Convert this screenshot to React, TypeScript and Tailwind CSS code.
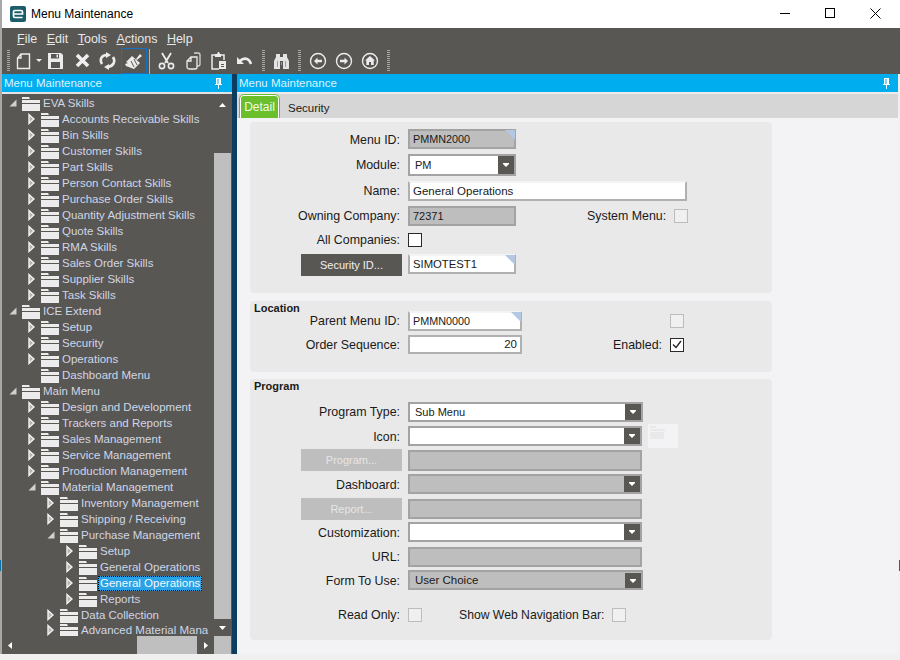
import React from 'react';

const fontClass = "font-['Liberation_Sans',Arial,sans-serif]";

type TreeItem = { label: string; level: number; open?: boolean; leaf?: boolean; selected?: boolean };

const treeItems: TreeItem[] = [
  { label: 'EVA Skills', level: 0, open: true },
  { label: 'Accounts Receivable Skills', level: 1 },
  { label: 'Bin Skills', level: 1 },
  { label: 'Customer Skills', level: 1 },
  { label: 'Part Skills', level: 1 },
  { label: 'Person Contact Skills', level: 1 },
  { label: 'Purchase Order Skills', level: 1 },
  { label: 'Quantity Adjustment Skills', level: 1 },
  { label: 'Quote Skills', level: 1 },
  { label: 'RMA Skills', level: 1 },
  { label: 'Sales Order Skills', level: 1 },
  { label: 'Supplier Skills', level: 1 },
  { label: 'Task Skills', level: 1 },
  { label: 'ICE Extend', level: 0, open: true },
  { label: 'Setup', level: 1 },
  { label: 'Security', level: 1 },
  { label: 'Operations', level: 1 },
  { label: 'Dashboard Menu', level: 1, leaf: true },
  { label: 'Main Menu', level: 0, open: true },
  { label: 'Design and Development', level: 1 },
  { label: 'Trackers and Reports', level: 1 },
  { label: 'Sales Management', level: 1 },
  { label: 'Service Management', level: 1 },
  { label: 'Production Management', level: 1 },
  { label: 'Material Management', level: 1, open: true },
  { label: 'Inventory Management', level: 2 },
  { label: 'Shipping / Receiving', level: 2 },
  { label: 'Purchase Management', level: 2, open: true },
  { label: 'Setup', level: 3 },
  { label: 'General Operations', level: 3 },
  { label: 'General Operations', level: 3, selected: true },
  { label: 'Reports', level: 3 },
  { label: 'Data Collection', level: 2 },
  { label: 'Advanced Material Mana', level: 2 },
];

const Folder = () => (
  <svg width="18" height="15" viewBox="0 0 18 15" className="ml-[4px] shrink-0">
    <path d="M0 1h7l1 2H0z" fill="#ececec" />
    <path d="M0 4h18v3H0z" fill="#ececec" />
    <path d="M0 8h18v7H0z" fill="#ececec" />
  </svg>
);

const Expander = ({ open }: { open?: boolean }) =>
  open ? (
    <svg width="8" height="8" viewBox="0 0 8 8" className="shrink-0">
      <path d="M7.500 0.500v7h-7z" fill="#d0d0d0" />
    </svg>
  ) : (
    <svg width="7" height="12" viewBox="0 0 7 12" className="shrink-0">
      <path d="M1 1.500l5 4.500-5 4.500z" fill="#b4b4b4" stroke="#f2f2f2" strokeWidth="1.400" />
    </svg>
  );

const Grip = () => (
  <div className="h-[22px] w-[3px] shrink-0 bg-[repeating-linear-gradient(to_bottom,#a8a8a6_0,#a8a8a6_1px,transparent_1px,transparent_2px)]" />
);

const PinIcon = () => (
  <svg width="9" height="11" viewBox="0 0 9 11">
    <path d="M2 0h5v6h1v1H1V6h1z M3.500 1v5h1V1z" fill="#fff" fillRule="evenodd" />
    <path d="M4 7h1v4H4z" fill="#fff" />
  </svg>
);

const ToolIcon = ({ children, w = 18 }: { children: React.ReactNode; w?: number }) => (
  <svg width={w} height="18" viewBox={`0 0 ${w} 18`} fill="none" className="shrink-0">
    {children}
  </svg>
);

const Toolbar = () => (
  <div className="flex h-[26px] items-center pl-[5px]">
    <Grip />
    <div className="ml-[6px]">
      <ToolIcon w={15}>
        <path d="M5 2h8.500v14.500h-12V6z M5 2v4H1.500" stroke="#ececec" strokeWidth="1.400" />
      </ToolIcon>
    </div>
    <svg width="6" height="3" viewBox="0 0 6 3" className="ml-[5px] mb-[2px]">
      <path d="M0 0h6L3 3z" fill="#ececec" />
    </svg>
    <div className="ml-[5px]">
      <ToolIcon w={17}>
        <path d="M1 1h13l2 2v14H1z" fill="#ececec" />
        <path d="M4 2h8v4.500H4z M4 10h9v6H4z" fill="#595754" />
        <path d="M9.500 2.500h1.500v3H9.500z" fill="#ececec" />
      </ToolIcon>
    </div>
    <div className="ml-[11px]">
      <ToolIcon w={15}>
        <path d="M2 3l11 11M13 3L2 14" stroke="#efefef" strokeWidth="3.600" />
      </ToolIcon>
    </div>
    <div className="ml-[9px]">
      <ToolIcon w={17}>
        <path d="M3 12C0 7 3 3 8 3M14 5c3 5 0 9-5 10" stroke="#ececec" strokeWidth="2.600" />
        <path d="M7 0l5 3-5 3z M10 12l-5 3 5 3z" fill="#ececec" />
      </ToolIcon>
    </div>
    <div className="ml-[5px] flex h-[26px] w-[26px] shrink-0 items-center justify-center border border-[#1673c2]">
      <ToolIcon w={20}>
        <path d="M12 7l4-5 2 2-5 4z" fill="#ececec" />
        <path d="M8 4l8 7-6 6-8-3-1-2 3-1-2-1z" fill="#ececec" />
        <path d="M7 9l3 6M10 7l3 6" stroke="#595754" strokeWidth="1" />
      </ToolIcon>
    </div>
    <div className="ml-[2px] h-[25px] w-px shrink-0 bg-[#b5b5b3]" />
    <div className="ml-[8px]">
      <ToolIcon w={17}>
        <path d="M4 1l6 10M13 1L7 11" stroke="#ececec" strokeWidth="1.800" />
        <circle cx="4" cy="14" r="2.600" stroke="#ececec" strokeWidth="1.600" />
        <circle cx="13" cy="14" r="2.600" stroke="#ececec" strokeWidth="1.600" />
      </ToolIcon>
    </div>
    <div className="ml-[11px]">
      <ToolIcon w={15}>
        <path d="M8 1h4c1 0 2 1 2 2v9c0 1-1 2-2 2H11" stroke="#d5d5d5" strokeWidth="1.300" />
        <path d="M5 5h6v10c0 1-1 2-2 2H3c-1 0-2-1-2-2V9z M5 5v4H1" stroke="#ececec" strokeWidth="1.300" />
      </ToolIcon>
    </div>
    <div className="ml-[10px]">
      <ToolIcon w={15}>
        <path d="M4 3H1v14h7" stroke="#ececec" strokeWidth="1.500" />
        <path d="M10 3h3v5" stroke="#ececec" strokeWidth="1.500" />
        <path d="M4 2h2l1-2h1l1 2h1v3H4z" fill="#ececec" />
        <path d="M8 9h7v8H8z" fill="#ececec" />
        <path d="M10 12h3v1h-3z M10 14h3v1h-3z" fill="#595754" />
      </ToolIcon>
    </div>
    <div className="ml-[10px]">
      <ToolIcon w={17}>
        <path d="M4 9c4-4 9-3 11 3" stroke="#ececec" strokeWidth="2.600" />
        <path d="M1 5v7h7z" fill="#ececec" />
      </ToolIcon>
    </div>
    <div className="ml-[9px]">
      <Grip />
    </div>
    <div className="ml-[8px]">
      <ToolIcon w={17}>
        <path d="M3 2h4v3h3V2h4v3l2 4v8h-6V9H7v8H1V9l2-4z" fill="#e4e4e4" />
        <path d="M8 10h1v3H8z M4 9h1v6H4z M12 9h1v6h-1z" fill="#9d9d9b" />
      </ToolIcon>
    </div>
    <div className="ml-[8px]">
      <Grip />
    </div>
    <div className="ml-[8px]">
      <ToolIcon w={18}>
        <circle cx="9" cy="9" r="7.500" stroke="#ececec" strokeWidth="1.400" />
        <path d="M5 9l3.500-3.500v2.300H13v2.400H8.500v2.300z" fill="#ececec" />
      </ToolIcon>
    </div>
    <div className="ml-[8px]">
      <ToolIcon w={18}>
        <circle cx="9" cy="9" r="7.500" stroke="#ececec" strokeWidth="1.400" />
        <path d="M13 9l-3.500-3.500v2.300H5v2.400h4.500v2.300z" fill="#ececec" />
      </ToolIcon>
    </div>
    <div className="ml-[8px]">
      <ToolIcon w={18}>
        <circle cx="9" cy="9" r="7.500" stroke="#ececec" strokeWidth="1.400" />
        <path d="M9 4l5 4.500h-1.300V13H5.300V8.500H4z" fill="#ececec" />
        <path d="M8 10h2v3H8z" fill="#595754" />
      </ToolIcon>
    </div>
    <div className="ml-[8px]">
      <Grip />
    </div>
  </div>
);

const menuLabels: [string, string][] = [
  ['F', 'ile'],
  ['E', 'dit'],
  ['T', 'ools'],
  ['A', 'ctions'],
  ['H', 'elp'],
];

const Arrow = ({ up, left, right }: { up?: boolean; left?: boolean; right?: boolean }) => {
  if (left) return <svg width="4" height="7" viewBox="0 0 4 7"><path d="M4 0v7L0 3.500z" fill="#fff" /></svg>;
  if (right) return <svg width="4" height="7" viewBox="0 0 4 7"><path d="M0 0v7l4-3.500z" fill="#fff" /></svg>;
  return (
    <svg width="7" height="4" viewBox="0 0 7 4">
      <path d={up ? 'M0 4h7L3.500 0z' : 'M0 0h7L3.500 4z'} fill="#fff" />
    </svg>
  );
};

const Tree = () => (
  <div className="flex min-h-0 flex-1 flex-col bg-[#595754]">
    <div className="flex min-h-0 flex-1">
      <div className="min-w-0 flex-1 overflow-hidden pt-[1px]">
        {treeItems.map((item, i) => {
          const indent = ['pl-[5px]', 'pl-[24px]', 'pl-[43px]', 'pl-[62px]'][item.level];
          const last = i === treeItems.length - 1;
          return (
            <div key={i} className={`flex h-[16px] items-center whitespace-nowrap ${indent} ${last ? 'mt-[-1px]' : ''}`}>
              <div className="flex w-[11px] shrink-0 justify-center">
                {item.leaf ? null : <Expander open={item.open} />}
              </div>
              <Folder />
              <span
                className={
                  item.selected
                    ? 'ml-[1px] h-[15px] border border-dotted border-black bg-[#29a3e6] px-[1px] text-[11.500px] leading-[13px] text-[#f2f6ff]'
                    : 'ml-[3px] text-[11.500px] leading-[16px] text-[#cfd6e6]'
                }
              >
                {item.label}
              </span>
            </div>
          );
        })}
      </div>
      <div className="flex w-[17px] shrink-0 flex-col">
        <div className="flex h-[17px] shrink-0 items-center justify-center pt-[4px]">
          <Arrow up />
        </div>
        <div className="h-[42px] shrink-0" />
        <div className="flex-1 bg-[#bfbfbf]" />
        <div className="flex h-[17px] shrink-0 items-center justify-center">
          <Arrow />
        </div>
      </div>
      <div className="w-px shrink-0" />
    </div>
    <div className="flex h-[18px] shrink-0 pr-px">
      <div className="flex w-[18px] items-center justify-center pr-[2px]">
        <Arrow left />
      </div>
      <div className="w-[117px]" />
      <div className="w-[60px] bg-[#bfbfbf]" />
      <div className="flex flex-1 items-center justify-center">
        <Arrow right />
      </div>
      <div className="w-[17px] bg-[#bfbfbf]" />
    </div>
  </div>
);

const Field = ({
  value,
  className,
  disabled,
  corner,
  right,
}: {
  value?: string;
  className: string;
  disabled?: boolean;
  corner?: boolean;
  right?: boolean;
}) => (
  <div
    className={`relative flex shrink-0 items-center border-2 px-[3px] text-[#1a1a1a] ${
      disabled ? 'border-[#a3a3a3] bg-[#bebebe]' : 'border-[#b0b0b0] border-t-[#f4f4f4] bg-white'
    } ${right ? 'justify-end' : ''} ${className}`}
  >
    {value}
    {corner && (
      <svg width="10" height="10" viewBox="0 0 10 10" className="absolute right-[-1px] top-[-1px]">
        <path d="M0 0h10v10z" fill="#b4c8e4" />
      </svg>
    )}
  </div>
);

const Combo = ({ value, className, disabled }: { value?: string; className: string; disabled?: boolean }) => (
  <div
    className={`flex h-[20px] shrink-0 items-center border-2 border-[#a3a3a3] text-[#1a1a1a] ${
      disabled ? 'bg-[#bebebe]' : 'bg-white'
    } ${className}`}
  >
    <span className="flex-1 pl-[5px]">{value}</span>
    <div className="flex h-full w-[16px] items-center justify-center bg-[#595754]">
      <svg width="6" height="4" viewBox="0 0 6 4">
        <path d="M0 0h6v1L3 4 0 1z" fill="#fff" />
      </svg>
    </div>
  </div>
);

const Check = ({ checked, disabled, className = '' }: { checked?: boolean; disabled?: boolean; className?: string }) => (
  <div
    className={`flex h-[14px] w-[14px] shrink-0 items-center justify-center border ${
      disabled ? 'border-[#bdbdbd] bg-[#f0f0f0]' : 'border-[#2a2a2a] bg-white'
    } ${className}`}
  >
    {checked && (
      <svg width="10" height="9" viewBox="0 0 10 9">
        <path d="M1 4.500l3 3L9 1" stroke="#222" strokeWidth="1.300" fill="none" />
      </svg>
    )}
  </div>
);

const Label = ({ children, low }: { children: React.ReactNode; low?: boolean }) => (
  <div className={`w-[150px] shrink-0 text-right text-[12.400px] leading-[18px] text-[#1a1a1a] ${low ? 'pt-[2px]' : ''}`}>
    {children}
  </div>
);

const ActionButton = ({ children, disabled }: { children: React.ReactNode; disabled?: boolean }) => (
  <div
    className={`ml-[51px] flex h-[22px] w-[101px] shrink-0 items-center justify-center text-[11px] ${
      disabled ? 'bg-[#bebebe] text-[#e6e6e6]' : 'bg-[#595754] text-[#f0f0f0]'
    }`}
  >
    {children}
  </div>
);

const Row = ({ children, className = '' }: { children: React.ReactNode; className?: string }) => (
  <div className={`flex items-center gap-[8px] ${className}`}>{children}</div>
);

const Title = ({ children }: { children: React.ReactNode }) => (
  <div className="absolute left-[4px] top-0 text-[11px] font-bold leading-[14px] text-[#1a1a1a]">{children}</div>
);

const DetailForm = () => (
  <div className="flex min-h-0 flex-1 flex-col bg-[#f3f3f5] pl-[13px] pt-[4px]">
    <div className="h-[171px] w-[522px] rounded-[4px] bg-[#e9e9e9] pt-[7px]">
      <Row>
        <Label low>Menu ID:</Label>
        <Field value="PMMN2000" disabled corner className="h-[20px] w-[108px] text-[10.800px]" />
      </Row>
      <Row className="mt-[5px]">
        <Label>Module:</Label>
        <Combo value="PM" className="!h-[22px] w-[108px] text-[11px]" />
      </Row>
      <Row className="mt-[5px]">
        <Label>Name:</Label>
        <Field value="General Operations" className="h-[20px] w-[279px] pt-[1px] text-[11.500px]" />
      </Row>
      <Row className="mt-[5px]">
        <Label>Owning Company:</Label>
        <Field value="72371" disabled className="h-[20px] w-[108px] text-[11px]" />
        <div className="ml-[63px] text-[12.400px] leading-[18px] text-[#1a1a1a]">System Menu:</div>
        <Check disabled />
      </Row>
      <Row className="mt-[5px]">
        <Label>All Companies:</Label>
        <Check />
      </Row>
      <Row className="mt-[5px] items-start">
        <ActionButton>Security ID...</ActionButton>
        <Field value="SIMOTEST1" corner className="ml-[-2px] h-[20px] w-[108px] text-[11.300px]" />
      </Row>
    </div>

    <div className="relative mt-[8px] h-[71px] w-[522px] rounded-[4px] bg-[#e9e9e9] pt-[10px]">
      <Title>Location</Title>
      <Row>
        <Label>Parent Menu ID:</Label>
        <Field value="PMMN0000" corner className="h-[20px] w-[114px] text-[10.800px]" />
        <Check disabled className="ml-[140px]" />
      </Row>
      <Row className="mt-[4px]">
        <Label>Order Sequence:</Label>
        <Field value="20" right className="h-[19px] w-[114px] !border-t-[#b0b0b0] text-[11.500px]" />
        <div className="ml-[82px] w-[50px] text-right text-[12.400px] leading-[18px] text-[#1a1a1a]">Enabled:</div>
        <Check checked />
      </Row>
    </div>

    <div className="relative mt-[7px] h-[261px] w-[522px] rounded-[4px] bg-[#e9e9e9] pt-[23px]">
      <Title>Program</Title>
      <Row>
        <Label>Program Type:</Label>
        <Combo value="Sub Menu" className="w-[235px] text-[11px]" />
      </Row>
      <Row className="mt-[4px]">
        <Label low>Icon:</Label>
        <Combo className="w-[234px]" />
        <div className="-my-[2px] ml-[-2px] flex h-[24px] w-[30px] shrink-0 bg-[#f3f3f5] p-[1px]">
          <svg width="16" height="15" viewBox="0 0 16 15">
            <path d="M1 1h6l1 2H1z M1 4h15v2H1z M1 7h14v7H1z" fill="#e9e9e9" />
          </svg>
        </div>
      </Row>
      <Row className="mt-[3px] items-start">
        <ActionButton disabled>Program...</ActionButton>
        <Field disabled className="ml-[-2px] mt-[1px] h-[21px] w-[234px]" />
      </Row>
      <Row className="mt-[3px]">
        <Label low>Dashboard:</Label>
        <Combo disabled className="w-[234px]" />
      </Row>
      <Row className="mt-[4px] items-start">
        <ActionButton disabled>Report...</ActionButton>
        <Field disabled className="ml-[-2px] mt-[1px] h-[20px] w-[234px]" />
      </Row>
      <Row className="mt-[2px]">
        <Label low>Customization:</Label>
        <Combo className="w-[234px]" />
      </Row>
      <Row className="mt-[5px]">
        <Label>URL:</Label>
        <Field disabled className="h-[20px] w-[234px]" />
      </Row>
      <Row className="mt-[3px]">
        <Label low>Form To Use:</Label>
        <Combo value="User Choice" disabled className="w-[235px] pt-[1px] text-[11.500px]" />
      </Row>
      <Row className="mt-[16px]">
        <Label>Read Only:</Label>
        <Check disabled />
        <div className="ml-[29px] text-[12.200px] leading-[18px] text-[#1a1a1a]">Show Web Navigation Bar:</div>
        <Check disabled />
      </Row>
    </div>
  </div>
);

const App = () => (
  <div className={`relative flex h-[660px] w-[900px] flex-col overflow-hidden bg-white ${fontClass}`}>
    <div className="flex h-[28px] shrink-0 items-center border-l-2 border-[#a8a8a8] bg-white pl-[8px]">
      <div className="flex h-[16px] w-[16px] items-center justify-center rounded-[2px] bg-[#1d5c6b]">
        <svg width="12" height="10" viewBox="0 0 12 10">
          <path d="M10.500 8.500H3A1.500 1.500 0 0 1 1.500 7V3A1.500 1.500 0 0 1 3 1.500h6A1.500 1.500 0 0 1 10.500 3v2H2" stroke="#fff" strokeWidth="1.700" fill="none" />
        </svg>
      </div>
      <div className="ml-[5px] text-[12px] text-black">Menu Maintenance</div>
      <div className="ml-auto flex items-center pb-[2px]">
        <div className="h-[1px] w-[10px] bg-black" />
        <div className="ml-[35px] h-[10px] w-[10px] border border-black" />
        <svg width="11" height="11" viewBox="0 0 11 11" className="ml-[35px] mr-[19px]">
          <path d="M0.500 0.500l10 10M10.500 0.500l-10 10" stroke="#000" strokeWidth="1" />
        </svg>
      </div>
    </div>

    <div className="flex h-[46px] shrink-0 flex-col border-l-2 border-[#a8a8a8] bg-[#595754]">
      <div className="flex h-[20px] items-end gap-[9.500px] pb-[1px] pl-[15px] text-[12.500px] leading-[16px] text-[#e8e8e8]">
        {menuLabels.map(([first, rest]) => (
          <span key={first}>
            <span className="underline">{first}</span>
            {rest}
          </span>
        ))}
      </div>
      <Toolbar />
    </div>

    <div className="flex min-h-0 flex-1 border-l-2 border-r-2 border-[#f0f0f0] border-l-[#a8a8a8]">
      <div className="flex w-[230px] shrink-0 flex-col">
        <div className="flex h-[18px] shrink-0 items-center justify-between bg-[#00adef] pl-[2px] pr-[9px] pt-[1px] text-[11.500px] text-[#dff3ff]">
          <span>Menu Maintenance</span>
          <PinIcon />
        </div>
        <div className="h-[2px] shrink-0 bg-[#e4e4e4]" />
        <Tree />
      </div>
      <div className="w-[5px] shrink-0 bg-[#0c3c5e]" />
      <div className="flex min-w-0 flex-1 flex-col">
        <div className="flex h-[18px] shrink-0 items-center justify-between bg-[#00adef] pl-[2px] pr-[7px] pt-[1px] text-[11.500px] text-[#dff3ff]">
          <span>Menu Maintenance</span>
          <PinIcon />
        </div>
        <div className="h-[2px] shrink-0 bg-[#ececec]" />
        <div className="flex h-[24px] shrink-0 items-end bg-[#d6d6d6] pl-[3px]">
          <div className="flex h-[23px] w-[39px] items-start justify-center rounded-t-[4px] border border-b-0 border-white bg-[#6abf2b] pt-[2px] text-[12px] text-[#f2fae8] outline outline-1 outline-[#6abf2b]">
            Detail
          </div>
          <div className="mb-[1px] ml-[9px] text-[11.500px] text-[#1a1a1a]">Security</div>
        </div>
        <DetailForm />
      </div>
    </div>
    <div className="h-[6px] shrink-0 bg-[#f0f0f0]" />
    <div className="absolute left-0 top-[560px] h-[11px] w-px bg-[#0a6ea8]" />
    <div className="absolute right-0 top-[560px] h-[11px] w-px bg-[#0a6ea8]" />
  </div>
);

export default App;
